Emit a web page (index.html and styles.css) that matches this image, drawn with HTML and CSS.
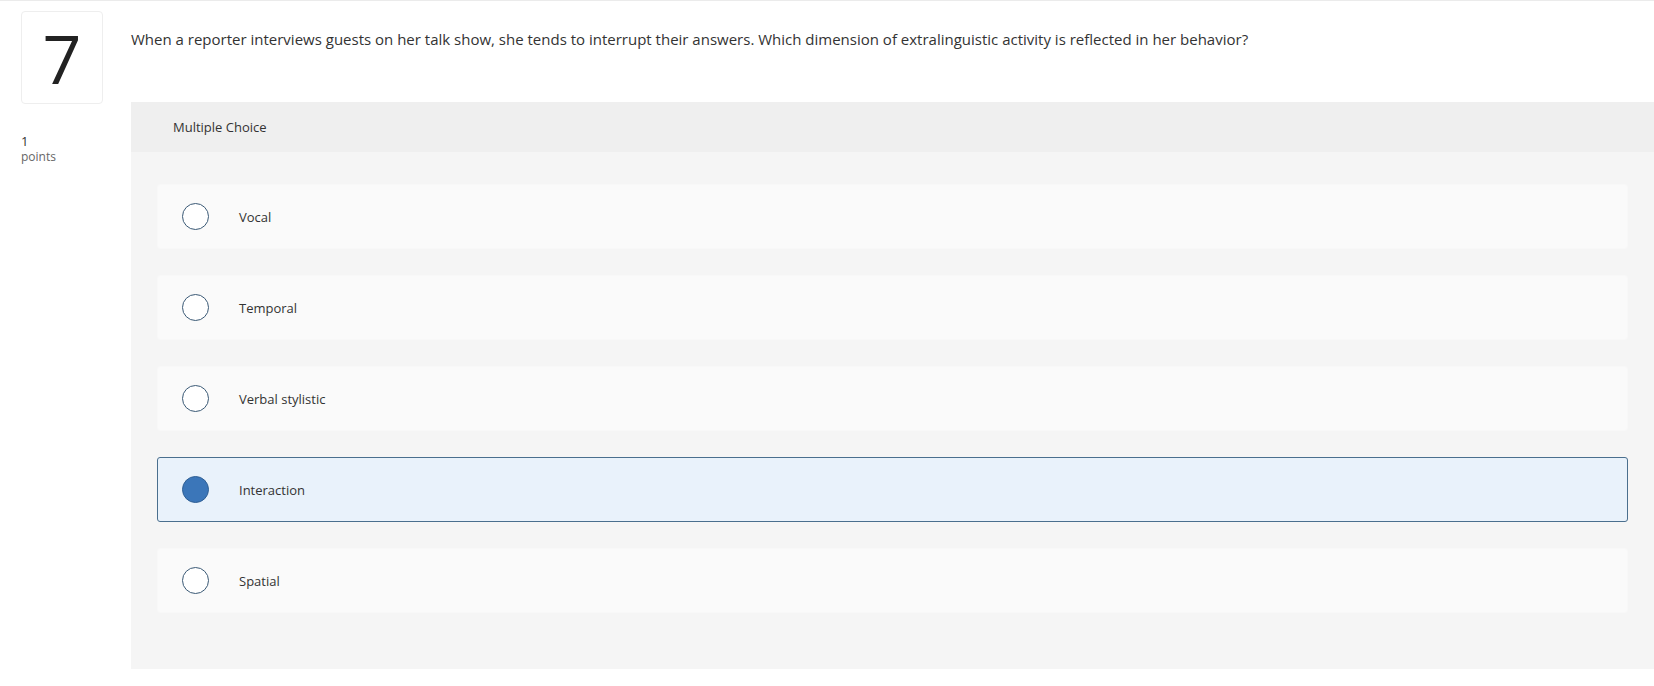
FILE: index.html
```html
<!DOCTYPE html>
<html lang="en">
<head>
    <meta charset="UTF-8">
    <title>Question 7</title>
    <link rel="stylesheet" href="styles.css">
</head>
<body>
    <div class="question">
        <div class="side">
            <div class="number">7</div>
            <div class="points">
                <span class="value">1</span>
                <span class="label">points</span>
            </div>
        </div>

        <div class="main">
            <p class="prompt">When a reporter interviews guests on her talk show, she tends to interrupt their answers. Which dimension of extralinguistic activity is reflected in her behavior?</p>

            <div class="panel">
                <div class="panel-header">Multiple Choice</div>
                <div class="choices">
                    <label class="choice"><span class="radio"></span><span class="text">Vocal</span></label>
                    <label class="choice"><span class="radio"></span><span class="text">Temporal</span></label>
                    <label class="choice"><span class="radio"></span><span class="text">Verbal stylistic</span></label>
                    <label class="choice selected"><span class="radio"></span><span class="text">Interaction</span></label>
                    <label class="choice"><span class="radio"></span><span class="text">Spatial</span></label>
                </div>
            </div>
        </div>
    </div>
</body>
</html>
```
FILE: styles.css
```css
body {
    margin: 0;
    font-family: 'Open Sans', sans-serif;
    color: #333;
    background-color: #fff;
}

.question {
    display: flex;
    border-top: 1px solid #ebebeb;
}

.side {
    width: 110px;
    padding-left: 21px;
    flex-shrink: 0;
}

.number {
    width: 80px;
    height: 91px;
    margin-top: 10px;
    border: 1px solid #eeeeee;
    border-radius: 4px;
    display: flex;
    align-items: center;
    justify-content: center;
    font-size: 68px;
    font-weight: 400;
    color: #222;
}

.points {
    margin-top: 29px;
    display: flex;
    flex-direction: column;
}

.points .value {
    font-size: 13px;
    line-height: 16px;
    color: #333;
}

.points .label {
    font-size: 12px;
    line-height: 16px;
    color: #666;
}

.main {
    flex: 1;
}

.prompt {
    margin: 28px 0 53px;
    font-size: 15px;
    line-height: 20px;
    color: #333;
}

.panel {
    background-color: #f5f5f5;
}

.panel-header {
    height: 50px;
    display: flex;
    align-items: center;
    padding-left: 42px;
    background-color: #efefef;
    font-size: 13px;
    color: #333;
}

.choices {
    padding: 32px 26px 56px;
    display: flex;
    flex-direction: column;
    gap: 26px;
}

.choice {
    height: 63px;
    display: flex;
    align-items: center;
    padding-left: 24px;
    background-color: #fafafa;
    border: 1px solid #f8f8f8;
    border-radius: 3px;
    font-size: 13px;
}

.radio {
    width: 25px;
    height: 25px;
    border: 1.5px solid #3a5975;
    border-radius: 50%;
    background-color: #fff;
    margin-right: 30px;
}

.choice.selected {
    background-color: #e9f2fb;
    border-color: #4a6f8e;
}

.choice.selected .radio {
    background-color: #3b76b9;
    border-color: #2f5f94;
}
```
